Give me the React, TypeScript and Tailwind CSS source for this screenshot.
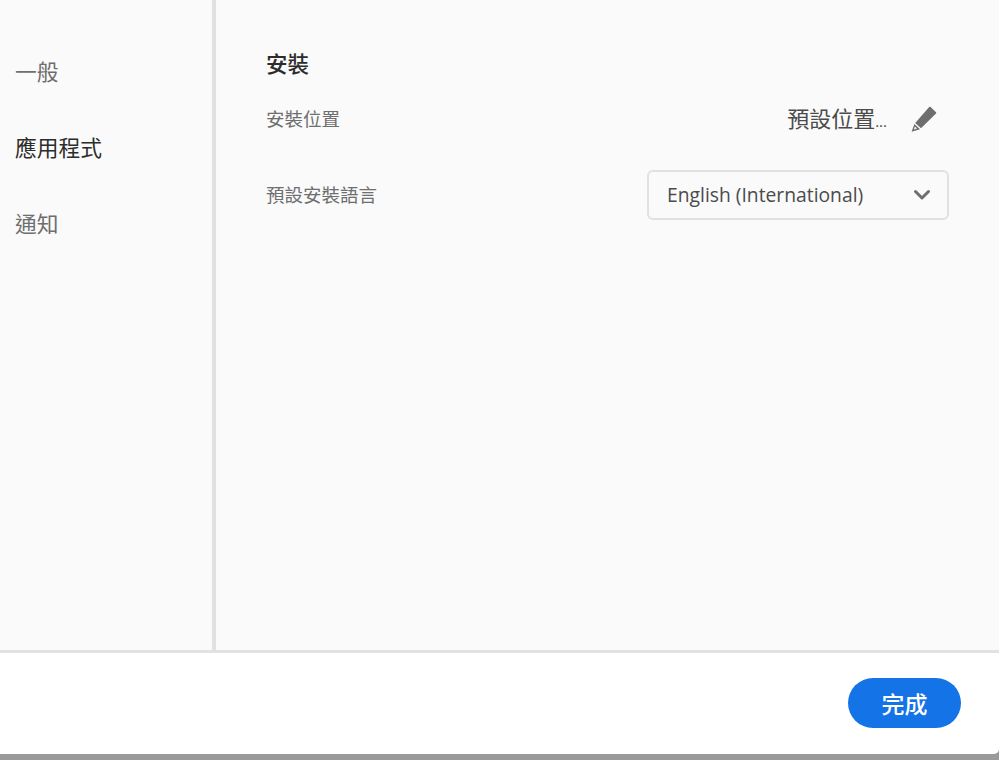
const cjk = "font-['Noto_Sans_CJK_TC','Noto_Sans',sans-serif]";

function Pencil() {
  return (
    <svg width="26" height="26" viewBox="0 0 26 26" className="shrink-0 block">
      <path fill="#6e6e6e" d="M19.6 1 L25 6.2 Q25.6 7 25 7.6 L10 22.2 L4.2 17 L18.2 1 Q18.9 0.4 19.6 1 Z" />
      <path fill="#6e6e6e" fillRule="evenodd" d="M3.4 18 L9 23.2 L0.6 25.8 Z M3.9 20.6 L2.9 23.6 L6 22.6 Z" />
    </svg>
  );
}

export default function App() {
  return (
    <div className={`w-[999px] h-[760px] overflow-hidden flex flex-col bg-[#9a9a9a] ${cjk}`}>
      <div className="flex h-[650px] bg-[#fafafa]">
        <nav className="w-[212px] shrink-0 pl-[15px] pt-[56px] flex flex-col gap-[46px] text-[21.75px] leading-[30px] text-[#6e6e6e]">
          <div>一般</div>
          <div className="text-[#2c2c2c]">應用程式</div>
          <div>通知</div>
        </nav>
        <div className="w-[4px] shrink-0 bg-[#e1e1e1]" />
        <main className="flex-1 pl-[50px] pr-[50px] pt-[48px]">
          <h2 className="text-[21.5px] leading-[30px] font-medium text-[#2c2c2c]">安裝</h2>
          <div className="mt-[21px] h-[40px] flex items-center justify-between">
            <span className="text-[18.5px] text-[#6e6e6e]">安裝位置</span>
            <div className="flex items-center pr-[12px]">
              <span className="text-[22px] leading-[30px] text-[#4b4b4b]">預設位置<span className="text-[15px] font-['Open_Sans',sans-serif]">...</span></span>
              <span className="ml-[24px]"><Pencil /></span>
            </div>
          </div>
          <div className="mt-[31px] flex items-center justify-between">
            <span className="text-[18.5px] text-[#6e6e6e]">預設安裝語言</span>
            <button className="w-[302px] h-[50px] rounded-[6px] border-2 border-[#e1e1e1] bg-[#fafafa] pl-[18px] pr-[16px] flex items-center justify-between text-[#4b4b4b]">
              <span className="font-['Open_Sans',sans-serif] text-[19.3px]">English (International)</span>
              <svg width="18" height="12" viewBox="0 0 18 12"><path d="M2.5 2.5 L9 9 L15.5 2.5" fill="none" stroke="#6e6e6e" strokeWidth="3" strokeLinecap="round" strokeLinejoin="round" /></svg>
            </button>
          </div>
        </main>
      </div>
      <footer className="h-[104px] bg-white border-t-[3px] border-[#e1e1e1] rounded-br-[5px] flex items-start justify-end pt-[25px] pr-[38px]">
        <button className="w-[113px] h-[50px] rounded-full bg-[#1473e6] text-white text-[23px] font-medium">完成</button>
      </footer>
    </div>
  );
}
